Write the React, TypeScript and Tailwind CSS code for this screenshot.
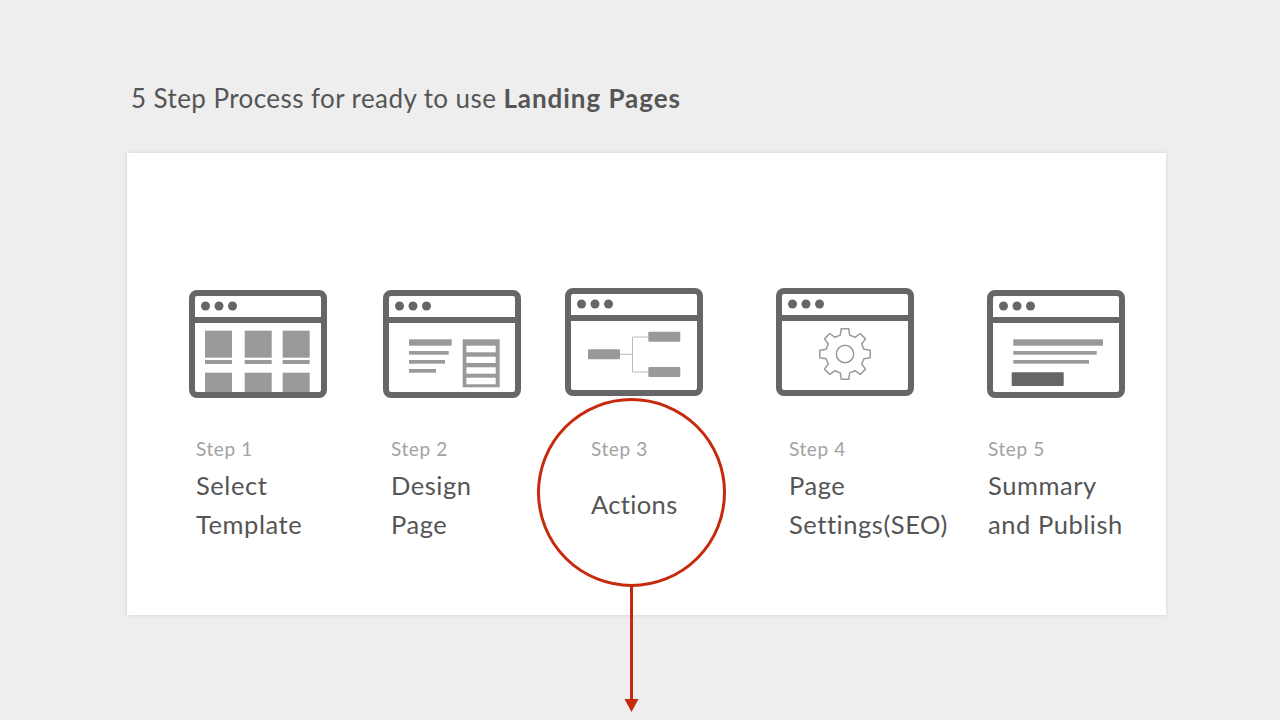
const Frame = ({ children }: { children?: React.ReactNode }) => (
  <svg width="138" height="108" viewBox="0 0 138 108" className="block shrink-0">
    <rect x="3" y="3" width="132" height="102" rx="5" fill="#fff" />
    {children}
    <rect x="3" y="3" width="132" height="102" rx="5" fill="none" stroke="#666" strokeWidth="6" />
    <rect x="3" y="27" width="132" height="6" fill="#666" />
    <circle cx="16.5" cy="16" r="4.5" fill="#666" />
    <circle cx="30" cy="16" r="4.5" fill="#666" />
    <circle cx="43.5" cy="16" r="4.5" fill="#666" />
  </svg>
);

const gearPath = (() => {
  const cx = 69, cy = 66, R = 25.5, r = 19.5, n = 8;
  const pts: string[] = [];
  for (let i = 0; i < n; i++) {
    const a = (i / n) * Math.PI * 2 - Math.PI / 2;
    const s = Math.PI / n;
    [[r, -s * 0.62], [R, -s * 0.38], [R, s * 0.38], [r, s * 0.62]].forEach(([rad, d]) => {
      pts.push(`${(cx + rad * Math.cos(a + d)).toFixed(2)} ${(cy + rad * Math.sin(a + d)).toFixed(2)}`);
    });
  }
  return "M" + pts.join("L") + "Z";
})();

const Icon1 = () => (
  <Frame>
    {[16, 55.7, 93.7].map((x) => (
      <g key={x} fill="#999">
        <rect x={x} y="40.7" width="27" height="27" />
        <rect x={x} y="70" width="27" height="4" />
        <rect x={x} y="82.7" width="27" height="20" />
      </g>
    ))}
  </Frame>
);

const Icon2 = () => (
  <Frame>
    <g fill="#999">
      <rect x="26" y="49.3" width="42.7" height="6.4" />
      <rect x="26" y="61" width="39.7" height="3.7" />
      <rect x="26" y="70" width="36" height="3.7" />
      <rect x="26" y="79" width="27" height="3.7" />
      <rect x="79.7" y="49.3" width="37" height="48" />
    </g>
    <g fill="#fff">
      <rect x="83.4" y="55.7" width="29.3" height="6.6" />
      <rect x="83.4" y="66.7" width="29.3" height="6.3" />
      <rect x="83.4" y="77.3" width="29.3" height="6.4" />
      <rect x="83.4" y="87.7" width="29.3" height="6.6" />
    </g>
  </Frame>
);

const Icon3 = () => (
  <Frame>
    <path d="M55 66.3H67.5M67.5 49H83M67.5 49V84H83" fill="none" stroke="#bbb" strokeWidth="1" />
    <g fill="#999">
      <rect x="23" y="61.3" width="32" height="10" rx="1" />
      <rect x="83.3" y="43.7" width="32" height="10" rx="1" />
      <rect x="83.3" y="79" width="32" height="10" rx="1" />
    </g>
  </Frame>
);

const Icon4 = () => (
  <Frame>
    <path d={gearPath} fill="none" stroke="#999" strokeWidth="1.5" strokeLinejoin="round" />
    <circle cx="69" cy="66" r="8.7" fill="none" stroke="#999" strokeWidth="1.5" />
  </Frame>
);

const Icon5 = () => (
  <Frame>
    <g fill="#999">
      <rect x="26.3" y="49.3" width="89.7" height="6.4" />
      <rect x="26.3" y="61" width="83.4" height="3.7" />
      <rect x="26.3" y="70" width="75.7" height="3.7" />
    </g>
    <rect x="24.7" y="82.3" width="52" height="13.7" rx="1" fill="#666" />
  </Frame>
);

const Label = ({ step, lines, className }: { step: string; lines: string[]; className: string }) => (
  <div className={className}>
    <div className="text-[19px] leading-[24px] text-[#a2a2a2] tracking-[0.6px]">{step}</div>
    <div className="mt-[5px] text-[25.5px] leading-[39px] text-[#555] tracking-[0.55px]">
      {lines.map((l) => (
        <div key={l} className="whitespace-nowrap">{l}</div>
      ))}
    </div>
  </div>
);

export default function App() {
  return (
    <div className="relative w-[1280px] h-[720px] overflow-hidden bg-[#eeeeee] font-['Lato','Liberation_Sans',sans-serif]">
      <h1 className="pl-[131px] pt-[82px] text-[26px] leading-[32px] font-normal text-[#555] tracking-[0.42px]">
        5 Step Process for ready to use <b className="font-bold tracking-[0.95px]">Landing Pages</b>
      </h1>
      <div className="relative ml-[127px] mt-[39px] w-[1039px] h-[462px] bg-white pl-[62px] pt-[135px] shadow-[0_0_4px_rgba(0,0,0,0.12)]">
        <div className="flex items-start">
          <div className="mt-[2px]"><Icon1 /></div>
          <div className="mt-[2px] ml-[56px]"><Icon2 /></div>
          <div className="ml-[44px]"><Icon3 /></div>
          <div className="ml-[73px]"><Icon4 /></div>
          <div className="mt-[2px] ml-[73px]"><Icon5 /></div>
        </div>
        <div className="relative flex mt-[39px] pl-[7px]">
          <Label className="w-[195px]" step="Step 1" lines={["Select", "Template"]} />
          <Label className="w-[200px]" step="Step 2" lines={["Design", "Page"]} />
          <div className="w-[198px]">
            <div className="relative z-10 text-[19px] leading-[24px] text-[#a2a2a2] tracking-[0.6px]">Step 3</div>
            <div className="relative z-10 mt-[24px] text-[25.5px] leading-[39px] text-[#555] tracking-[0.35px]">Actions</div>
          </div>
          <Label className="w-[199px]" step="Step 4" lines={["Page", "Settings(SEO)"]} />
          <Label className="" step="Step 5" lines={["Summary", "and Publish"]} />
        </div>
      </div>
      <svg width="200" height="330" viewBox="0 0 200 330" className="absolute left-[532px] top-[390px]">
        <circle cx="99.5" cy="102.5" r="93" fill="none" stroke="#c7290c" strokeWidth="3" />
        <path d="M99.5 196V314" stroke="#c7290c" strokeWidth="3" />
        <path d="M92.5 309H106.5L99.5 322Z" fill="#c7290c" />
      </svg>
    </div>
  );
}
